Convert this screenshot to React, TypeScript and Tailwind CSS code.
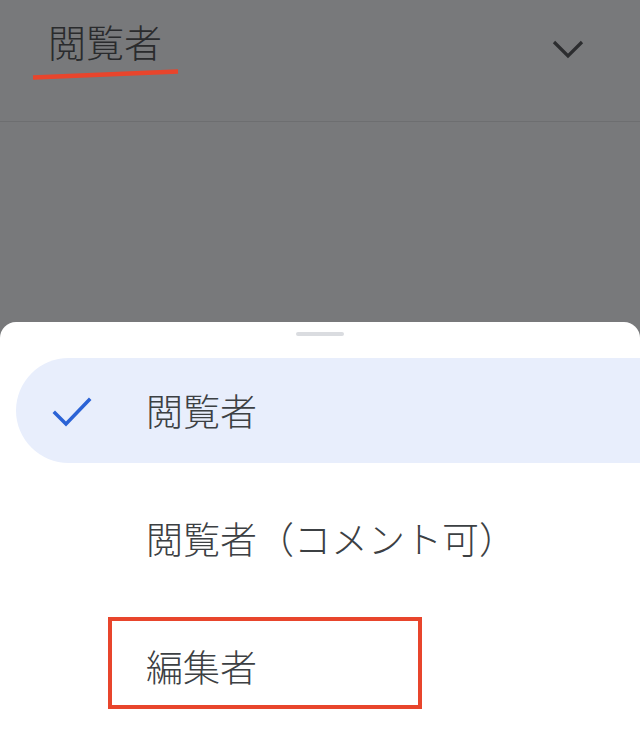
import React from "react";

const jp = "font-['Noto_Sans_CJK_JP','Noto_Sans',sans-serif]";

function CheckIcon() {
  return (
    <svg width="40" height="32" viewBox="0 0 40 32" fill="none" className="shrink-0">
      <polyline
        points="3,18 14,29 37,5"
        stroke="#2b63d6"
        strokeWidth="3.5"
        strokeLinecap="square"
        strokeLinejoin="miter"
      />
    </svg>
  );
}

export default function App() {
  return (
    <div className={`relative w-[640px] h-[729px] overflow-hidden bg-[#78797b] flex flex-col font-light ${jp}`}>
      {/* dimmed page behind the sheet */}
      <div className="flex items-start h-[122px] pl-[48px] pr-[56px] pt-[22px] border-b border-[#6d6e70] shrink-0">
        <span className="text-[38px] leading-[38px] text-[#2a2b2d]">閲覧者</span>
        <svg width="32" height="20" viewBox="0 0 32 20" fill="none" className="ml-auto mt-[17px]">
          <polyline points="2,3 16,17 30,3" stroke="#2c2d2f" strokeWidth="3.2" />
        </svg>
      </div>

      {/* hand-drawn red underline */}
      <svg className="absolute left-0 top-0" width="200" height="100" viewBox="0 0 200 100" fill="none">
        <line x1="33" y1="77.5" x2="178" y2="71.5" stroke="#e8452c" strokeWidth="4.5" />
      </svg>

      {/* bottom sheet */}
      <div className="mt-auto h-[407px] bg-white rounded-t-[16px] flex flex-col">
        <div className="w-12 h-1 rounded-full bg-[#dadce0] mx-auto mt-[10px]" />
        <div className="flex flex-col gap-[23px] mt-[22px]">
          <div className="ml-4 h-[105px] rounded-l-full bg-[#e8eefc] flex items-center pl-[36px] gap-[54px]">
            <CheckIcon />
            <span className="text-[37px] leading-none text-[#3c4043]">閲覧者</span>
          </div>
          <div className="ml-4 h-[105px] flex items-center pl-[130px]">
            <span className="text-[37px] leading-none text-[#3c4043]">閲覧者（コメント可）</span>
          </div>
          <div className="relative ml-4 h-[105px] flex items-center pl-[130px]">
            <span className="text-[37px] leading-none text-[#3c4043]">編集者</span>
            <div className="absolute left-[92px] top-[3px] w-[314px] h-[92px] border-4 border-[#e8452c]" />
          </div>
        </div>
      </div>
    </div>
  );
}
